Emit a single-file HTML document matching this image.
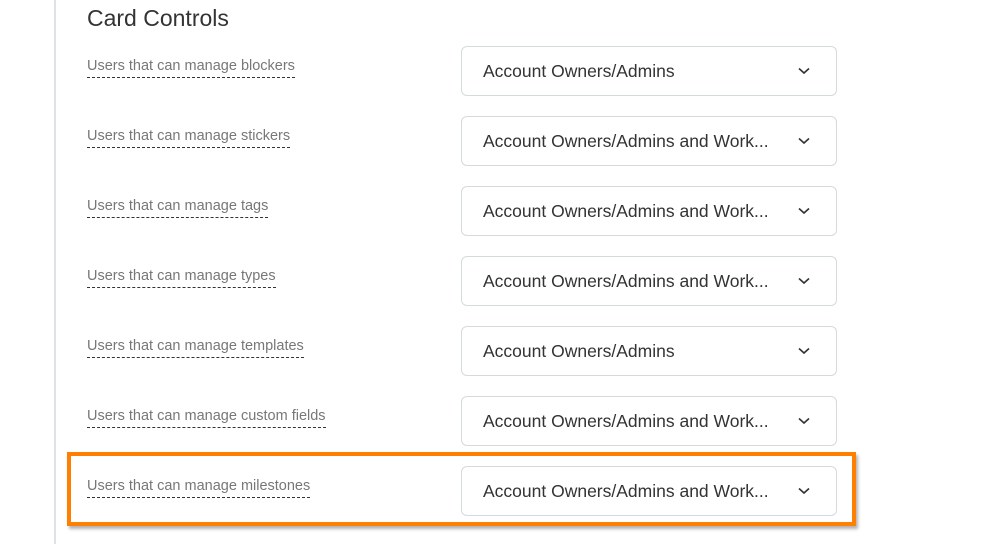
<!DOCTYPE html>
<html><head><style>
body{margin:0;width:981px;height:544px;background:#fff;position:relative;overflow:hidden;font-family:"Liberation Sans",sans-serif}
.vl{position:absolute;left:54px;top:0;width:2px;height:544px;background:#dde3e8}
h1{position:absolute;left:87px;top:5px;margin:0;font-weight:normal;font-size:23px;color:#333}
.lab{position:absolute;left:87px;font-size:14.5px;color:#777;border-bottom:1px dashed #333;padding-bottom:2px;line-height:17px}
.sel{position:absolute;left:461px;width:374px;height:48px;border:1px solid #d5dadd;border-radius:6px;box-sizing:border-box;width:376px;height:50px;font-size:17.5px;color:#333;line-height:48px;padding-left:21px}
.sel svg{position:absolute;right:26px;top:20px}
.hl{position:absolute;left:67px;top:452px;width:781px;height:66px;border:4px solid #ff7f00;box-shadow:2px 3px 3px rgba(0,0,0,.3)}
</style></head><body>
<div class="vl"></div>
<h1>Card Controls</h1>
<div class="hl"></div>
<div class="lab" style="top:58px">Users that can manage blockers</div>
<div class="sel" style="top:46px">Account Owners/Admins<svg width="12" height="8"><path d="M1 1.5L6 6L11 1.5" stroke="#333" stroke-width="1.6" fill="none"/></svg></div>
<div class="lab" style="top:128px">Users that can manage stickers</div>
<div class="sel" style="top:116px">Account Owners/Admins and Work...<svg width="12" height="8"><path d="M1 1.5L6 6L11 1.5" stroke="#333" stroke-width="1.6" fill="none"/></svg></div>
<div class="lab" style="top:198px">Users that can manage tags</div>
<div class="sel" style="top:186px">Account Owners/Admins and Work...<svg width="12" height="8"><path d="M1 1.5L6 6L11 1.5" stroke="#333" stroke-width="1.6" fill="none"/></svg></div>
<div class="lab" style="top:268px">Users that can manage types</div>
<div class="sel" style="top:256px">Account Owners/Admins and Work...<svg width="12" height="8"><path d="M1 1.5L6 6L11 1.5" stroke="#333" stroke-width="1.6" fill="none"/></svg></div>
<div class="lab" style="top:338px">Users that can manage templates</div>
<div class="sel" style="top:326px">Account Owners/Admins<svg width="12" height="8"><path d="M1 1.5L6 6L11 1.5" stroke="#333" stroke-width="1.6" fill="none"/></svg></div>
<div class="lab" style="top:408px">Users that can manage custom fields</div>
<div class="sel" style="top:396px">Account Owners/Admins and Work...<svg width="12" height="8"><path d="M1 1.5L6 6L11 1.5" stroke="#333" stroke-width="1.6" fill="none"/></svg></div>
<div class="lab" style="top:478px">Users that can manage milestones</div>
<div class="sel" style="top:466px">Account Owners/Admins and Work...<svg width="12" height="8"><path d="M1 1.5L6 6L11 1.5" stroke="#333" stroke-width="1.6" fill="none"/></svg></div>
</body></html>
